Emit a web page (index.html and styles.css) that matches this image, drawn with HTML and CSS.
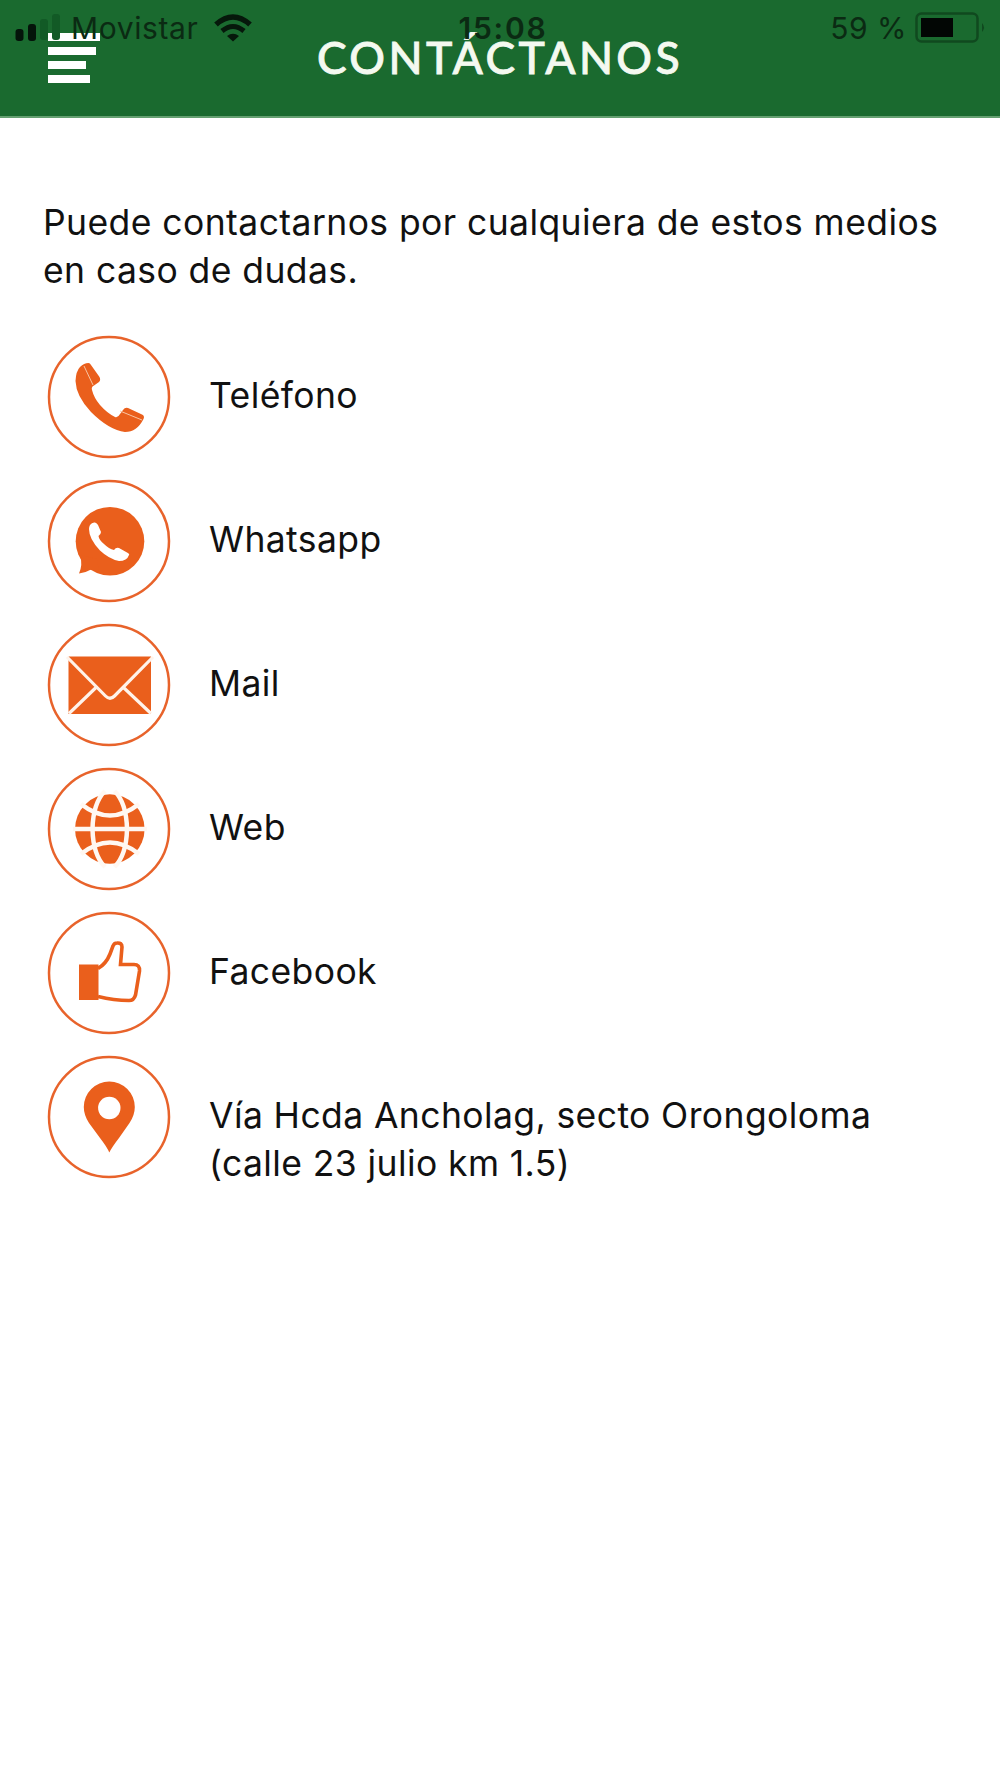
FILE: index.html
```html
<!DOCTYPE html>
<html lang="es">
<head>
    <meta charset="UTF-8">
    <meta name="viewport" content="width=device-width, initial-scale=1.0">
    <title>Contáctanos</title>
    <link rel="stylesheet" href="styles.css">
</head>
<body>
    <header class="header">
        <button class="menu" aria-label="Menu">
            <span class="menu_line"></span>
            <span class="menu_line menu_line-2"></span>
            <span class="menu_line menu_line-3"></span>
            <span class="menu_line menu_line-4"></span>
        </button>
        <h1 class="title">CONTÁCTANOS</h1>
        <div class="status">
            <div class="status_left">
                <svg class="signal" width="46" height="30" viewBox="0 0 46 30">
                    <rect x="0.500" y="16" width="8" height="12" rx="3" fill="#04140a"/>
                    <rect x="13" y="11" width="8" height="17" rx="3" fill="#04140a"/>
                    <rect x="25" y="6" width="8" height="21" rx="3" fill="#125a26"/>
                    <rect x="37" y="1" width="8" height="26" rx="3" fill="#125a26"/>
                </svg>
                <span class="carrier">Movistar</span>
                <svg class="wifi" width="38" height="28" viewBox="0 0 38 28">
                    <path d="M2 10.500Q19-4.500 36 10.500" fill="none" stroke="#06180b" stroke-width="5.500"/>
                    <path d="M8 17Q19 8 30 17" fill="none" stroke="#06180b" stroke-width="5"/>
                    <path d="M13 22Q19 17.500 25 22L19 27.500z" fill="#06180b"/>
                </svg>
            </div>
            <span class="clock">15:08</span>
            <div class="status_right">
                <span class="percent">59 %</span>
                <svg class="battery" width="72" height="32" viewBox="0 0 72 32">
                    <rect x="1.500" y="1.500" width="61" height="28" rx="5" fill="none" stroke="#10491f" stroke-width="2.500"/>
                    <rect x="6" y="6" width="32" height="19" fill="#020604"/>
                    <path d="M67 11Q71 15.500 67 20z" fill="#10491f"/>
                </svg>
            </div>
        </div>
    </header>

    <main class="main">
        <p class="intro">Puede contactarnos por cualquiera de estos medios<br>en caso de dudas.</p>
        <ul class="contacts">
            <li class="contact">
                <svg class="icon" viewBox="0 0 124 124">
                    <circle class="ring" cx="62" cy="62" r="60"/>
                    <path class="fill" d="M33 32Q37 28 41.500 28Q43 28 44 30L52.500 42Q54 45 52 47L47 50.500Q44 52 45 55Q47 63 53 70Q60 78 68 82Q71 83 73 79L76 75Q78 72 81 73L95 79.500Q98 81 96.500 84Q90 97 78 97Q62 95 44 77Q29 61 28.500 46Q29 36 33 32z"/>
                    <path class="cut-thin" d="M37 31L46 50M73 76L95 85"/>
                </svg>
                <span class="label">Teléfono</span>
            </li>
            <li class="contact">
                <svg class="icon" viewBox="0 0 124 124">
                    <circle class="ring" cx="62" cy="62" r="60"/>
                    <circle class="fill" cx="63" cy="62.300" r="34.300"/>
                    <path class="fill" d="M33 76Q36 86 32 94.500Q38 94 43 91Q46 90 52 94L50 80z"/>
                    <path class="white" d="M43 46Q45 43 48 43.500Q50 44 51 46L54 53Q54 55 51.500 57Q52 61 57 65Q62 70 67 71Q69 68 72 69L80 73.500Q83 75 82 76Q80 82 72 82Q62 80 53 71.500Q42 60 42 50Q42 48 43 46z"/>
                </svg>
                <span class="label">Whatsapp</span>
            </li>
            <li class="contact">
                <svg class="icon" viewBox="0 0 124 124">
                    <circle class="ring" cx="62" cy="62" r="60"/>
                    <rect class="fill" x="21.500" y="33.500" width="82.500" height="57.500"/>
                    <path class="cut" d="M20 34L58.500 73Q63 77.500 67.500 73L106 34M48.500 65L22 90.500M77 65L104 90.500"/>
                </svg>
                <span class="label">Mail</span>
            </li>
            <li class="contact">
                <svg class="icon" viewBox="0 0 124 124">
                    <circle class="ring" cx="62" cy="62" r="60"/>
                    <circle class="fill" cx="62.800" cy="62" r="34.800"/>
                    <path class="cut-globe" d="M26 62H100M34 37Q63 60 92 37M34 87Q63 64 92 87"/>
                    <path class="cut-globe" d="M58 24Q46 36 45.500 62Q46 88 58 100M67.500 24Q79.500 36 80 62Q79.500 88 67.500 100"/>
                </svg>
                <span class="label">Web</span>
            </li>
            <li class="contact">
                <svg class="icon" viewBox="0 0 124 124">
                    <circle class="ring" cx="62" cy="62" r="60"/>
                    <rect class="fill" x="32" y="53.500" width="19.500" height="35.500"/>
                    <path class="thumb" d="M51 57.500Q59 53 63 43L66 35Q67 32 70 32Q75 31.500 75 36L73.500 53.500H87Q93 53.500 92.500 60L88.500 84Q87 89.500 82 89.500Q67 89.500 51 85.500"/>
                </svg>
                <span class="label">Facebook</span>
            </li>
            <li class="contact">
                <svg class="icon" viewBox="0 0 124 124">
                    <circle class="ring" cx="62" cy="62" r="60"/>
                    <path class="fill" d="M62.300 97.500Q60 92 53 83L42 68Q36.800 60 36.800 52A25.500 25.500 0 0 1 87.800 52Q87.800 60 82.500 68L72 83Q65 92 62.300 97.500z"/>
                    <circle class="white" cx="62.300" cy="53" r="11.200"/>
                </svg>
                <span class="label">Vía Hcda Ancholag, secto Orongoloma<br>(calle 23 julio km 1.5)</span>
            </li>
        </ul>
    </main>
</body>
</html>
```

FILE: styles.css
```css
*{
    margin: 0;
    padding: 0;
    box-sizing: border-box;
}
body {
    background-color: #fff;
    font-family: Inter, "Liberation Sans", sans-serif;
    color: #111;
}
.header {
    position: relative;
    display: grid;
    grid-template-columns: 200px 1fr 200px;
    height: 118px;
    background-color: #1a6a2f;
    border-bottom: 2px solid #65a071;
}
.menu {
    display: flex;
    flex-direction: column;
    align-items: flex-start;
    gap: 6px;
    padding: 33px 0 0 48px;
    border: none;
    background: none;
}
.menu_line {
    width: 52px;
    height: 8px;
    background-color: #fff;
}
.menu_line-2 {
    width: 48px;
}
.menu_line-3 {
    width: 38px;
}
.menu_line-4 {
    width: 42px;
}
.title {
    padding-top: 30px;
    font-family: Lato, sans-serif;
    font-size: 44.5px;
    line-height: 54px;
    font-weight: 500;
    letter-spacing: 3.4px;
    text-align: center;
    white-space: nowrap;
    color: #f4f9f0;
    -webkit-text-stroke: 0.8px #f4f9f0;
}
/* phone status bar, lies over the header */
.status {
    position: absolute;
    top: 0;
    left: 0;
    width: 100%;
    height: 56px;
    padding: 0 13px 0 15px;
    display: grid;
    grid-template-columns: 1fr auto 1fr;
    align-items: center;
    font-size: 30px;
    color: #0b2a13;
}
.status_left {
    display: flex;
    align-items: center;
    gap: 10px;
}
.status_right {
    display: flex;
    align-items: center;
    justify-content: flex-end;
    gap: 8px;
}
.carrier {
    letter-spacing: 0.6px;
}
.wifi {
    margin-left: 6px;
}
.clock {
    padding-left: 4px;
    font-weight: 600;
    letter-spacing: 1.8px;
}
.percent {
    letter-spacing: 0.5px;
}
.main {
    padding: 81px 43px 0;
}
.intro {
    font-size: 35.5px;
    line-height: 48px;
    letter-spacing: 0.42px;
    white-space: nowrap;
}
.contacts {
    padding: 40px 0 0 4px;
    list-style: none;
}
.contact {
    display: flex;
    height: 144px;
    gap: 38px;
}
.icon {
    width: 124px;
    height: 124px;
    flex-shrink: 0;
}
.label {
    padding-top: 37px;
    font-size: 35.5px;
    line-height: 48px;
    letter-spacing: 0.4px;
    white-space: nowrap;
}
.ring {
    fill: none;
    stroke: #e8632b;
    stroke-width: 2.5;
}
.fill {
    fill: #ea5f1c;
}
.white {
    fill: #fff;
}
.cut {
    fill: none;
    stroke: #fff3ea;
    stroke-width: 3.2;
}
.cut-thin {
    fill: none;
    stroke: #f9c4a2;
    stroke-width: 1;
}
.cut-globe {
    fill: none;
    stroke: #fff8f2;
    stroke-width: 4.5;
}
.thumb {
    fill: none;
    stroke: #ea5f1c;
    stroke-width: 3.6;
}
```
